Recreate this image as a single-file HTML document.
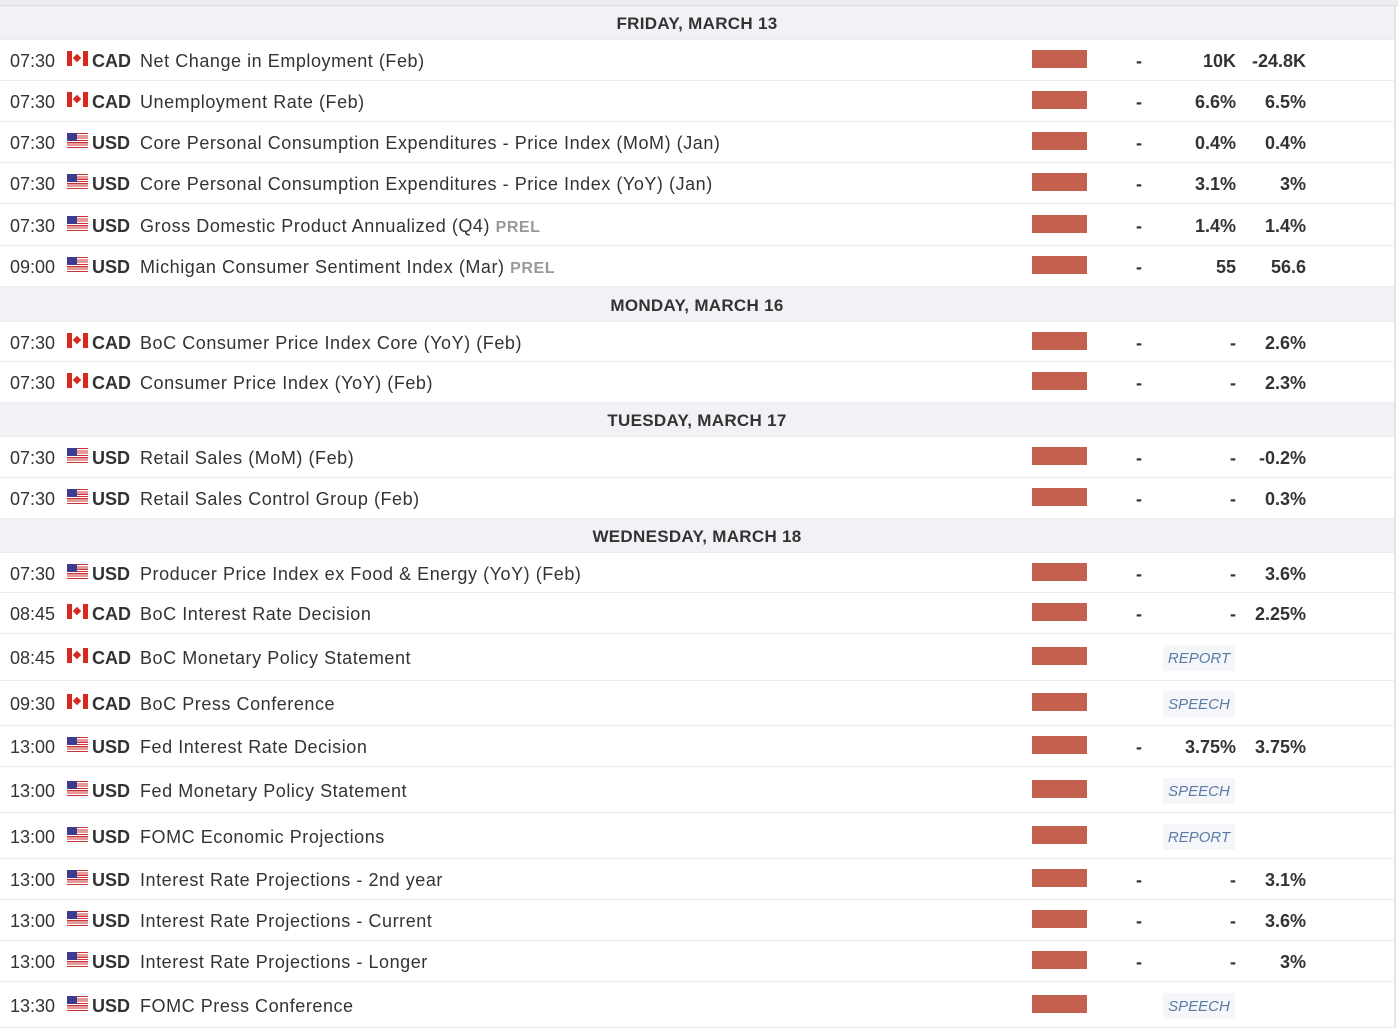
<!DOCTYPE html>
<html><head><meta charset="utf-8"><style>
body{margin:0;width:1400px;height:1029px;background:#fff;font-family:"Liberation Sans",sans-serif;color:#333;position:relative;overflow:hidden}
.top{position:absolute;left:0;top:0;width:1398px;height:5px;background:#eeeef2;border-bottom:1px solid #ddd}
.r,.h{position:absolute;left:0;width:1396px;border-right:2px solid #e4e4e8;border-bottom:1px solid #ececee;box-sizing:border-box}
.h{background:#f2f2f6;text-align:center;font-weight:bold;font-size:17px;letter-spacing:.3px;color:#333}
.r span,.r b{position:absolute;top:1px;white-space:nowrap;font-size:18px}
.t{left:10px}
.c{left:92px;font-weight:bold}
.n{left:140px;letter-spacing:.55px}
.n em{font-style:normal;font-weight:bold;color:#999;font-size:16px}
.f{position:absolute;left:67px;top:50%;margin-top:-9px;width:21px;height:15px}
.ca{background:linear-gradient(90deg,#d52b1e 0 5px,#fff 5px 16px,#d52b1e 16px)}
.ca:after{content:"";position:absolute;left:7px;top:4px;width:6px;height:6px;background:#d52b1e;transform:rotate(45deg)}
.us{background:repeating-linear-gradient(180deg,#c33 0 1.15px,#fff 1.15px 2.3px)}
.us:before{content:"";position:absolute;left:0;top:0;width:10px;height:8px;background:#3c3b8e}
.bar{position:absolute;left:1032px;top:50%;margin-top:-10px;width:55px;height:18px;background:#c4604e}
.d{left:1136px;font-weight:bold}
.a{right:158px;font-weight:bold;text-align:right}
.p{right:88px;font-weight:bold;text-align:right}
.bd{position:absolute;left:1163px;top:50%;margin-top:-12px;width:72px;height:26px;background:#f5f6f9;color:#5a7aa6;font-style:italic;font-size:15px;line-height:28px;text-align:center}
</style></head><body>
<div class="top"></div>

<div class="h" style="top:6px;height:34px;line-height:36px">FRIDAY, MARCH 13</div>
<div class="r" style="top:40px;height:41px;line-height:41px"><span class="t">07:30</span><i class="f ca"></i><b class="c">CAD</b><span class="n">Net Change in Employment (Feb)</span><i class="bar"></i><span class="d">-</span><span class="a">10K</span><span class="p">-24.8K</span></div>
<div class="r" style="top:81px;height:41px;line-height:41px"><span class="t">07:30</span><i class="f ca"></i><b class="c">CAD</b><span class="n">Unemployment Rate (Feb)</span><i class="bar"></i><span class="d">-</span><span class="a">6.6%</span><span class="p">6.5%</span></div>
<div class="r" style="top:122px;height:41px;line-height:41px"><span class="t">07:30</span><i class="f us"></i><b class="c">USD</b><span class="n">Core Personal Consumption Expenditures - Price Index (MoM) (Jan)</span><i class="bar"></i><span class="d">-</span><span class="a">0.4%</span><span class="p">0.4%</span></div>
<div class="r" style="top:163px;height:41px;line-height:41px"><span class="t">07:30</span><i class="f us"></i><b class="c">USD</b><span class="n">Core Personal Consumption Expenditures - Price Index (YoY) (Jan)</span><i class="bar"></i><span class="d">-</span><span class="a">3.1%</span><span class="p">3%</span></div>
<div class="r" style="top:204px;height:42px;line-height:42px"><span class="t">07:30</span><i class="f us"></i><b class="c">USD</b><span class="n">Gross Domestic Product Annualized (Q4) <em>PREL</em></span><i class="bar"></i><span class="d">-</span><span class="a">1.4%</span><span class="p">1.4%</span></div>
<div class="r" style="top:246px;height:41px;line-height:41px"><span class="t">09:00</span><i class="f us"></i><b class="c">USD</b><span class="n">Michigan Consumer Sentiment Index (Mar) <em>PREL</em></span><i class="bar"></i><span class="d">-</span><span class="a">55</span><span class="p">56.6</span></div>

<div class="h" style="top:287px;height:35px;line-height:37px">MONDAY, MARCH 16</div>
<div class="r" style="top:322px;height:40px;line-height:40px"><span class="t">07:30</span><i class="f ca"></i><b class="c">CAD</b><span class="n">BoC Consumer Price Index Core (YoY) (Feb)</span><i class="bar"></i><span class="d">-</span><span class="a">-</span><span class="p">2.6%</span></div>
<div class="r" style="top:362px;height:41px;line-height:41px"><span class="t">07:30</span><i class="f ca"></i><b class="c">CAD</b><span class="n">Consumer Price Index (YoY) (Feb)</span><i class="bar"></i><span class="d">-</span><span class="a">-</span><span class="p">2.3%</span></div>

<div class="h" style="top:403px;height:34px;line-height:36px">TUESDAY, MARCH 17</div>
<div class="r" style="top:437px;height:41px;line-height:41px"><span class="t">07:30</span><i class="f us"></i><b class="c">USD</b><span class="n">Retail Sales (MoM) (Feb)</span><i class="bar"></i><span class="d">-</span><span class="a">-</span><span class="p">-0.2%</span></div>
<div class="r" style="top:478px;height:41px;line-height:41px"><span class="t">07:30</span><i class="f us"></i><b class="c">USD</b><span class="n">Retail Sales Control Group (Feb)</span><i class="bar"></i><span class="d">-</span><span class="a">-</span><span class="p">0.3%</span></div>

<div class="h" style="top:519px;height:34px;line-height:36px">WEDNESDAY, MARCH 18</div>
<div class="r" style="top:553px;height:40px;line-height:40px"><span class="t">07:30</span><i class="f us"></i><b class="c">USD</b><span class="n">Producer Price Index ex Food &amp; Energy (YoY) (Feb)</span><i class="bar"></i><span class="d">-</span><span class="a">-</span><span class="p">3.6%</span></div>
<div class="r" style="top:593px;height:41px;line-height:41px"><span class="t">08:45</span><i class="f ca"></i><b class="c">CAD</b><span class="n">BoC Interest Rate Decision</span><i class="bar"></i><span class="d">-</span><span class="a">-</span><span class="p">2.25%</span></div>
<div class="r" style="top:634px;height:47px;line-height:47px"><span class="t">08:45</span><i class="f ca"></i><b class="c">CAD</b><span class="n">BoC Monetary Policy Statement</span><i class="bar"></i><i class="bd">REPORT</i></div>
<div class="r" style="top:681px;height:45px;line-height:45px"><span class="t">09:30</span><i class="f ca"></i><b class="c">CAD</b><span class="n">BoC Press Conference</span><i class="bar"></i><i class="bd">SPEECH</i></div>
<div class="r" style="top:726px;height:41px;line-height:41px"><span class="t">13:00</span><i class="f us"></i><b class="c">USD</b><span class="n">Fed Interest Rate Decision</span><i class="bar"></i><span class="d">-</span><span class="a">3.75%</span><span class="p">3.75%</span></div>
<div class="r" style="top:767px;height:46px;line-height:46px"><span class="t">13:00</span><i class="f us"></i><b class="c">USD</b><span class="n">Fed Monetary Policy Statement</span><i class="bar"></i><i class="bd">SPEECH</i></div>
<div class="r" style="top:813px;height:46px;line-height:46px"><span class="t">13:00</span><i class="f us"></i><b class="c">USD</b><span class="n">FOMC Economic Projections</span><i class="bar"></i><i class="bd">REPORT</i></div>
<div class="r" style="top:859px;height:41px;line-height:41px"><span class="t">13:00</span><i class="f us"></i><b class="c">USD</b><span class="n">Interest Rate Projections - 2nd year</span><i class="bar"></i><span class="d">-</span><span class="a">-</span><span class="p">3.1%</span></div>
<div class="r" style="top:900px;height:41px;line-height:41px"><span class="t">13:00</span><i class="f us"></i><b class="c">USD</b><span class="n">Interest Rate Projections - Current</span><i class="bar"></i><span class="d">-</span><span class="a">-</span><span class="p">3.6%</span></div>
<div class="r" style="top:941px;height:41px;line-height:41px"><span class="t">13:00</span><i class="f us"></i><b class="c">USD</b><span class="n">Interest Rate Projections - Longer</span><i class="bar"></i><span class="d">-</span><span class="a">-</span><span class="p">3%</span></div>
<div class="r" style="top:982px;height:46px;line-height:46px"><span class="t">13:30</span><i class="f us"></i><b class="c">USD</b><span class="n">FOMC Press Conference</span><i class="bar"></i><i class="bd">SPEECH</i></div>
</body></html>
